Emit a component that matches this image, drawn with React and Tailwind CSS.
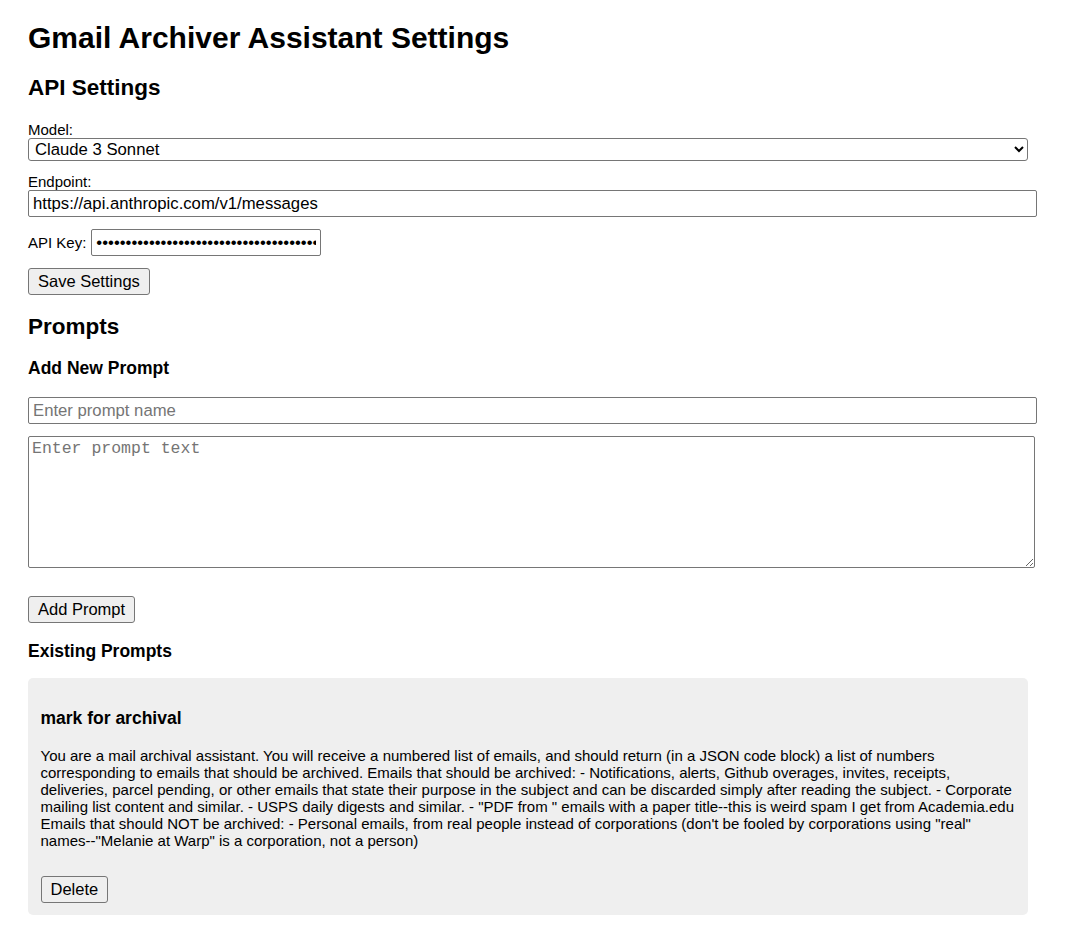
import { useState } from 'react';

const PROMPT_TEXT =
  'You are a mail archival assistant. You will receive a numbered list of emails, and should return (in a JSON code block) a list of numbers corresponding to emails that should be archived. Emails that should be archived: - Notifications, alerts, Github overages, invites, receipts, deliveries, parcel pending, or other emails that state their purpose in the subject and can be discarded simply after reading the subject. - Corporate mailing list content and similar. - USPS daily digests and similar. - "PDF from " emails with a paper title--this is weird spam I get from Academia.edu Emails that should NOT be archived: - Personal emails, from real people instead of corporations (don\'t be fooled by corporations using "real" names--"Melanie at Warp" is a corporation, not a person)';

const inputCls =
  'block h-[27px] border border-[#767676] rounded-[2px] bg-white px-[4px] text-[16.7px] text-black placeholder:text-[#757575] outline-none';
const btnCls =
  'block h-[27px] border border-[#767676] rounded-[3px] bg-[#efefef] px-[9px] text-[16.5px] leading-[19px] text-black';

export default function App() {
  const [model, setModel] = useState('claude-3-sonnet');
  const [endpoint, setEndpoint] = useState('https://api.anthropic.com/v1/messages');
  const [apiKey, setApiKey] = useState('sk-ant-api03-xxxxxxxxxxxxxxxxxxxxxxxxxxxxxxxxxxxxxxxxxxxx');

  return (
    <div className="min-h-screen bg-white pl-[28px] pt-[21px] pb-[30px] text-[15px] text-black font-['Liberation_Sans',Arial,sans-serif]">
      <h1 className="text-[30px] leading-[34px] font-bold">Gmail Archiver Assistant Settings</h1>

      {/* API settings */}
      <h2 className="mt-[20px] text-[22.5px] leading-[26px] font-bold">API Settings</h2>

      <label className="mt-[20px] block leading-[17px]">Model:</label>
      <select
        value={model}
        onChange={(e) => setModel(e.target.value)}
        className="block h-[23px] w-[1000px] border border-[#767676] rounded-[3px] bg-white pl-[2px] text-[16.7px] text-black"
      >
        <option value="claude-3-sonnet">Claude 3 Sonnet</option>
        <option value="claude-3-opus">Claude 3 Opus</option>
        <option value="claude-3-haiku">Claude 3 Haiku</option>
      </select>

      <label className="mt-[12px] block leading-[17px]">Endpoint:</label>
      <input
        type="text"
        value={endpoint}
        onChange={(e) => setEndpoint(e.target.value)}
        className={`${inputCls} w-[1009px]`}
      />

      <div className="mt-[12px] flex items-center">
        <label className="leading-[17px] mr-[5px]">API Key:</label>
        <input
          type="password"
          value={apiKey}
          onChange={(e) => setApiKey(e.target.value)}
          className={`${inputCls} w-[230px]`}
        />
      </div>

      <button className={`${btnCls} mt-[12px]`}>Save Settings</button>

      {/* Prompts */}
      <h2 className="mt-[19px] text-[22.5px] leading-[26px] font-bold">Prompts</h2>
      <h3 className="mt-[18px] text-[17.5px] leading-[20px] font-bold">Add New Prompt</h3>

      <input type="text" placeholder="Enter prompt name" className={`${inputCls} mt-[19px] w-[1009px]`} />
      <textarea
        placeholder="Enter prompt text"
        className="mt-[12px] block h-[132px] w-[1007px] border border-[#767676] rounded-[2px] bg-white px-[3px] py-[2px] font-['Liberation_Mono',monospace] text-[16.5px] leading-[19px] text-black placeholder:text-[#757575] outline-none"
      />

      <button className={`${btnCls} mt-[28px]`}>Add Prompt</button>

      <h3 className="mt-[18px] text-[17.5px] leading-[20px] font-bold">Existing Prompts</h3>

      <div className="mt-[17px] w-[1000px] rounded-[5px] bg-[#efefef] px-[12.5px] pt-[30px] pb-[12px]">
        <h3 className="text-[17.5px] leading-[20px] font-bold">mark for archival</h3>
        <p className="mt-[18.5px] leading-[17px]">{PROMPT_TEXT}</p>
        <button className={`${btnCls} mt-[27.5px]`}>Delete</button>
      </div>
    </div>
  );
}
